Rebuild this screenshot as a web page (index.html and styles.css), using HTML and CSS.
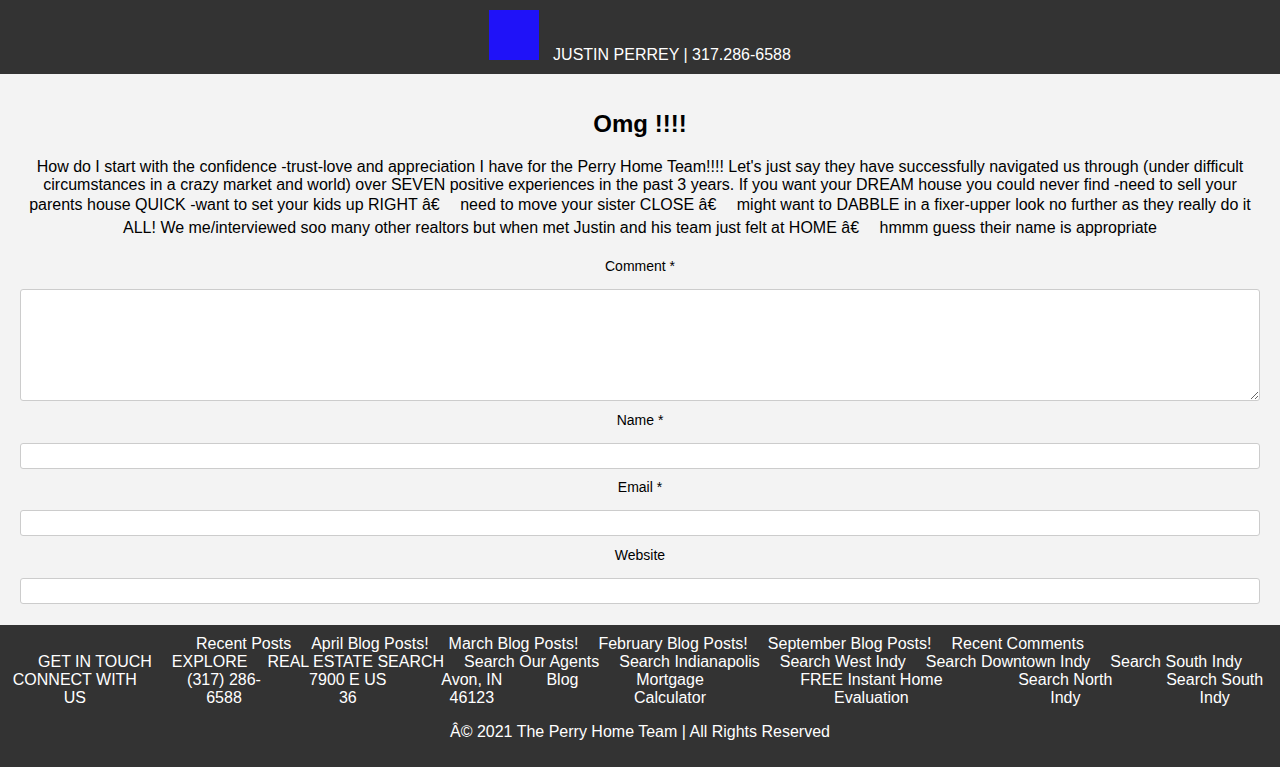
FILE: index.html
```html
<!DOCTYPE html>
<html lang="en">
<head>
<meta charset="utf-8">
<title>Omg !!!! - The Perry Home Team</title>
<link rel="stylesheet" href="styles.css">
</head>
<body>
<header class="site-header">
  <div class="brand"><span class="logo"></span><span class="contact">JUSTIN PERREY | 317.286-6588</span></div>
</header>
<main class="content">
  <h2 class="review-title">Omg !!!!</h2>
  <p class="review-text">How do I start with the confidence -trust-love and appreciation I have for the Perry Home Team!!!! Let's just say they have successfully navigated us through (under difficult circumstances in a crazy market and world) over SEVEN positive experiences in the past 3 years. If you want your DREAM house you could never find -need to sell your parents house QUICK -want to set your kids up RIGHT â€<span class="ctrl"></span> need to move your sister CLOSE â€<span class="ctrl"></span> might want to DABBLE in a fixer-upper look no further as they really do it ALL! We me/interviewed soo many other realtors but when met Justin and his team just felt at HOME â€<span class="ctrl"></span> hmmm guess their name is appropriate</p>
  <form class="comment-form">
    <div class="field field-first">
      <label class="field-label" for="comment">Comment *</label>
      <textarea class="field-area" id="comment"></textarea>
    </div>
    <div class="field">
      <label class="field-label" for="author">Name *</label>
      <input class="field-input" id="author" type="text">
    </div>
    <div class="field">
      <label class="field-label" for="email">Email *</label>
      <input class="field-input" id="email" type="text">
    </div>
    <div class="field">
      <label class="field-label" for="url">Website</label>
      <input class="field-input" id="url" type="text">
    </div>
  </form>
</main>
<footer class="site-footer">
  <div class="footer-row">
    <span>Recent Posts</span>
    <span>April Blog Posts!</span>
    <span>March Blog Posts!</span>
    <span>February Blog Posts!</span>
    <span>September Blog Posts!</span>
    <span>Recent Comments</span>
  </div>
  <div class="footer-row">
    <span>GET IN TOUCH</span>
    <span>EXPLORE</span>
    <span>REAL ESTATE SEARCH</span>
    <span>Search Our Agents</span>
    <span>Search Indianapolis</span>
    <span>Search West Indy</span>
    <span>Search Downtown Indy</span>
    <span>Search South Indy</span>
  </div>
  <div class="footer-row footer-links">
    <span>CONNECT WITH US</span>
    <span>(317) 286-6588</span>
    <span>7900 E US 36</span>
    <span>Avon, IN 46123</span>
    <span>Blog</span>
    <span>Mortgage Calculator</span>
    <span>FREE Instant Home Evaluation</span>
    <span>Search North Indy</span>
    <span>Search South Indy</span>
  </div>
  <p class="copyright">Â© 2021 The Perry Home Team | All Rights Reserved</p>
</footer>
</body>
</html>
```

FILE: styles.css
```css
html, body {
  margin: 0;
  padding: 0;
}

body {
  font-family: "Liberation Sans", Arial, sans-serif;
  font-size: 16px;
  color: #000;
  background: #333333;
}

.site-header {
  background: #333333;
  color: #fff;
  height: 74px;
  box-sizing: border-box;
  padding-top: 10px;
  text-align: center;
}

.logo {
  display: inline-block;
  width: 50px;
  height: 50px;
  background: #1f12f8;
  vertical-align: baseline;
}

.contact {
  margin-left: 14px;
}

.content {
  background: #f3f3f3;
  padding: 16px 20px 21px;
  text-align: center;
}

.review-title {
  font-size: 24px;
  font-weight: bold;
  margin: 20px 0;
}

.review-text {
  margin: 0 0 18px;
}

/* blank fallback glyph of the mis-decoded control character */
.ctrl {
  display: inline-block;
  width: 16px;
  height: 23px;
  vertical-align: -7px;
}

.comment-form {
  margin: 0;
}

.field {
  margin-top: 10.5px;
}

.field-first {
  margin-top: 0;
}

.field-label {
  display: block;
  font-size: 14px;
  line-height: 16px;
  margin-bottom: 15px;
}

.field-area,
.field-input {
  display: block;
  width: 100%;
  box-sizing: border-box;
  margin: 0;
  background: #fff;
  border: 1px solid #cccccc;
  border-radius: 3px;
  font-family: "Liberation Sans", Arial, sans-serif;
}

.field-area {
  height: 112px;
}

.field-input {
  height: 26px;
}

.site-footer {
  background: #333333;
  color: #fff;
  padding: 10px 0 26px;
  text-align: center;
}

.footer-row {
  display: flex;
  justify-content: center;
  gap: 20px;
}

.copyright {
  margin: 16px 0 0;
}
```
